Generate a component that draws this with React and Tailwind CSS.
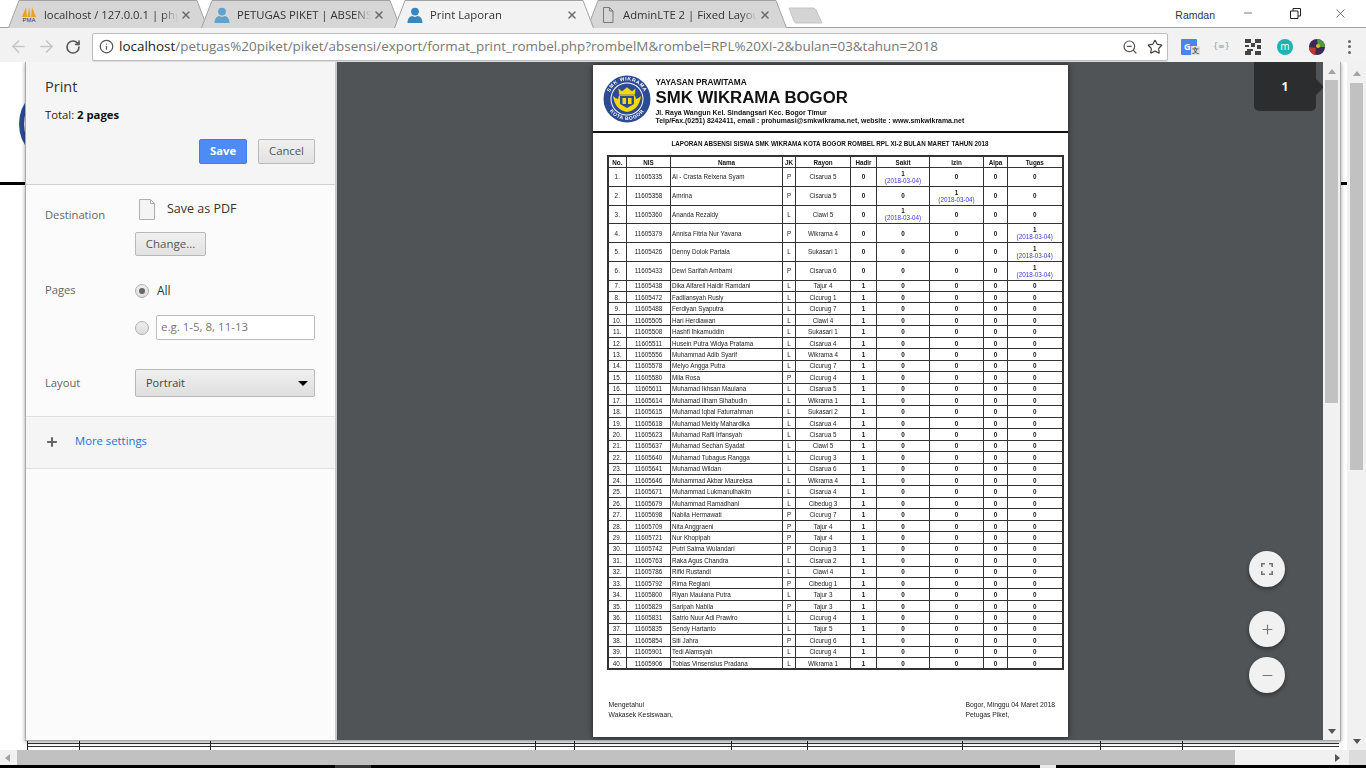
import { ArrowLeft, ArrowRight, RotateCw, Info, Star, ZoomOut, X, Minus, Plus } from "lucide-react";

const students = [
  ["11605335", "Al - Crasta Reixena Syam", "P", "Cisarua 5", "sakit"],
  ["11605358", "Amrina", "P", "Cisarua 5", "izin"],
  ["11605360", "Ananda Rezaldy", "L", "Ciawi 5", "sakit"],
  ["11605379", "Annisa Fitria Nur Yavana", "P", "Wikrama 4", "tugas"],
  ["11605426", "Denny Dolok Partala", "L", "Sukasari 1", "tugas"],
  ["11605433", "Dewi Sarifah Ambami", "P", "Cisarua 6", "tugas"],
  ["11605438", "Dika Alfarell Haidir Ramdani", "L", "Tajur 4"],
  ["11605472", "Fadliansyah Rusly", "L", "Cicurug 1"],
  ["11605488", "Ferdiyan Syaputra", "L", "Cicurug 7"],
  ["11605505", "Hari Herdiawan", "L", "Ciawi 4"],
  ["11605508", "Hashfi Ihkamuddin", "L", "Sukasari 1"],
  ["11605511", "Husein Putra Widya Pratama", "L", "Cisarua 4"],
  ["11605556", "Muhammad Adib Syarif", "L", "Wikrama 4"],
  ["11605578", "Melyo Angga Putra", "L", "Cicurug 7"],
  ["11605580", "Mila Rosa", "P", "Cicurug 4"],
  ["11605611", "Muhamad Ikhsan Maulana", "L", "Cisarua 5"],
  ["11605614", "Muhamad Ilham Sihabudin", "L", "Wikrama 1"],
  ["11605615", "Muhamad Iqbal Faturrahman", "L", "Sukasari 2"],
  ["11605618", "Muhamad Meidy Mahardika", "L", "Cisarua 4"],
  ["11605623", "Muhamad Rafli Irfansyah", "L", "Cisarua 5"],
  ["11605637", "Muhamad Sechan Syadat", "L", "Ciawi 5"],
  ["11605640", "Muhamad Tubagus Rangga", "L", "Cicurug 3"],
  ["11605641", "Muhamad Wildan", "L", "Cisarua 6"],
  ["11605646", "Muhammad Akbar Maureksa", "L", "Wikrama 4"],
  ["11605671", "Muhammad Lukmanulhakim", "L", "Cisarua 4"],
  ["11605679", "Muhammad Ramadhani", "L", "Cibedug 3"],
  ["11605698", "Nabila Hermawati", "P", "Cicurug 7"],
  ["11605709", "Nita Anggraeni", "P", "Tajur 4"],
  ["11605721", "Nur Khopipah", "P", "Tajur 4"],
  ["11605742", "Putri Salma Wulandari", "P", "Cicurug 3"],
  ["11605763", "Raka Agus Chandra", "L", "Cisarua 2"],
  ["11605786", "Rifki Rustandi", "L", "Ciawi 4"],
  ["11605792", "Rima Regiani", "P", "Cibedug 1"],
  ["11605800", "Riyan Maulana Putra", "L", "Tajur 3"],
  ["11605829", "Saripah Nabila", "P", "Tajur 3"],
  ["11605831", "Satrio Nuur Adi Prawiro", "L", "Cicurug 4"],
  ["11605835", "Sendy Hartanto", "L", "Tajur 5"],
  ["11605854", "Siti Jahra", "P", "Cicurug 6"],
  ["11605901", "Tedi Alamsyah", "L", "Cicurug 4"],
  ["11605906", "Tobias Vinsensius Pradana", "L", "Wikrama 1"],
];

const colWidths = ["w-[19px]", "w-[44px]", "w-[112px]", "w-[13px]", "w-[55px]", "w-[26px]", "w-[53px]", "w-[54px]", "w-[24px]", "w-[55px]"];
const headers = ["No.", "NIS", "Nama", "JK", "Rayon", "Hadir", "Sakit", "Izin", "Alpa", "Tugas"];
const tabs = [
  { title: "localhost / 127.0.0.1 | php", icon: "pma" },
  { title: "PETUGAS PIKET | ABSENS", icon: "person" },
  { title: "Print Laporan", icon: "person", active: true },
  { title: "AdminLTE 2 | Fixed Layou", icon: "doc" },
];
const pageTicks = ["w-[52px]", "w-[131px]", "w-[325px]", "w-[39px]", "w-[157px]", "w-[76px]", "w-[155px]", "w-[138px]", "w-[82px]", "w-[157px]"];

function PersonIcon({ active }) {
  return (
    <svg width="16" height="16" viewBox="0 0 16 16" className={active ? "text-[#3a87bd]" : "text-[#5fa3cf]"} fill="currentColor">
      <circle cx="8" cy="4.6" r="3.9" />
      <path d="M0.5 16c0-4.6 2.6-6.6 4.8-6.9 1.6 1.1 3.8 1.1 5.4 0 2.2.3 4.8 2.3 4.8 6.9z" />
    </svg>
  );
}

function PmaIcon() {
  return (
    <div className="w-4 h-4 flex flex-col items-center">
      <svg width="16" height="10" viewBox="0 0 16 10" fill="#f0a020">
        <path d="M1 10 5 0l1 10zM6.5 10 8 0l1.5 10zM10 10 11 0l4 10z" />
      </svg>
      <span className="text-[6px] leading-[6px] text-[#335] font-['Liberation_Sans',sans-serif]">PMA</span>
    </div>
  );
}

function DocIcon() {
  return (
    <svg width="16" height="16" viewBox="0 0 16 16" fill="none" stroke="#777" strokeWidth="1">
      <path d="M3.5.5h6l3.5 3.5v11.500h-9.500zM9.500.5v3.500h3.500" />
    </svg>
  );
}

function Tab({ title, icon, active }) {
  return (
    <div className={`relative w-[200px] h-[28px] -mr-[7px] shrink-0 flex items-center pt-[2px] pl-[13px] pr-[12px] ${active ? "z-10" : ""}`}>
      <svg className="absolute inset-0" width="200" height="28" viewBox="0 0 200 28">
        <path d="M0.500 28 11 0.500H189L199.500 28" fill={active ? "#f2f2f2" : "#d6d6d6"} stroke="#a2a2a2" />
      </svg>
      <div className="relative flex items-center w-full">
        <div className="w-4 h-4 shrink-0">
          {icon === "pma" && <PmaIcon />}
          {icon === "person" && <PersonIcon active={active} />}
          {icon === "doc" && <DocIcon />}
        </div>
        <span className="ml-[7px] w-[134px] overflow-hidden whitespace-nowrap text-[11.300px] text-[#333] [mask-image:linear-gradient(to_right,black_88%,transparent)]">{title}</span>
        <X size={12} strokeWidth={3} className="ml-[2px] text-[#6b6b6b]" />
      </div>
    </div>
  );
}

function TabStrip() {
  return (
    <div className="h-[28px] flex items-start bg-white pl-[8px] shrink-0 relative border-b border-[#a2a2a2]">
      {tabs.map((t) => (
        <Tab key={t.title} {...t} />
      ))}
      <svg className="ml-[8px] mt-[7px]" width="36" height="18" viewBox="0 0 36 18">
        <path d="M1 1h24q2 0 3 2l6 13H8q-1 0-2-2z" fill="#d4d4d4" stroke="#c4c4c4" />
      </svg>
      <span className="ml-auto mt-[8px] text-[10.500px] leading-[14px] text-[#333] font-['Liberation_Sans',sans-serif]">Ramdan</span>
      <div className="ml-[27px] mr-[18px] w-[106px] h-[18px] mt-[4px] flex items-center justify-between text-[#222]">
        <Minus size={12} strokeWidth={1.2} />
        <svg className="ml-[3px]" width="11" height="11" viewBox="0 0 11 11" fill="none" stroke="currentColor">
          <path d="M.5 3h7.500v7.500H.5zM3 3V.5h7.500V8H8" />
        </svg>
        <X size={15} strokeWidth={1} />
      </div>
    </div>
  );
}

function Extensions() {
  return (
    <div className="flex items-center gap-[16px] ml-auto -mr-[1px]">
      <div className="relative w-4 h-4 bg-[#4a86e8] rounded-[1px] text-[9px] font-bold text-white leading-4 pl-[3px]">
        G
        <span className="absolute -right-[3px] bottom-0 text-[7px] leading-[9px] bg-[#ddd] text-[#555] px-[1px]">文</span>
      </div>
      <span className="w-4 text-center text-[8px] text-[#999] font-['DejaVu_Sans',sans-serif] whitespace-nowrap">{"{≡}"}</span>
      <svg width="16" height="16" viewBox="0 0 8 8" fill="#444">
        <path d="M0 0h3v2H0zM5 0h3v2H5zM3 2h2v2H3zM0 3h2v1H0zM6 3h2v2H6zM1 5h3v1H1zM0 6h3v2H0zM5 6h3v2H5z" />
      </svg>
      <span className="w-4 h-4 rounded-full bg-[#19b5b5] text-white text-[10px] leading-[14px] text-center">m</span>
      <svg width="16" height="16" viewBox="0 0 16 16">
        <circle cx="8" cy="8" r="8" fill="#3b2a55" />
        <path d="M8 0a8 8 0 0 1 8 8H9z" fill="#4e9a3c" />
        <path d="M0 8a8 8 0 0 0 6 8l1-7z" fill="#c0392b" />
        <circle cx="9" cy="7" r="2" fill="#e4b62c" />
      </svg>
      <span className="flex flex-col gap-[2.500px] w-4 items-center">
        <i className="w-[3px] h-[3px] rounded-full bg-[#666]" />
        <i className="w-[3px] h-[3px] rounded-full bg-[#666]" />
        <i className="w-[3px] h-[3px] rounded-full bg-[#666]" />
      </span>
    </div>
  );
}

function Toolbar() {
  return (
    <div className="h-[34px] shrink-0 bg-[#f2f2f2] flex items-center pl-[9px] pr-[10px] pt-[3px]">
      <ArrowLeft size={19} strokeWidth={2} className="text-[#c6c6c6]" />
      <ArrowRight size={19} strokeWidth={2} className="ml-[9px] text-[#c6c6c6]" />
      <RotateCw size={16} strokeWidth={2.500} className="ml-[9px] text-[#5a5a5a]" />
      <div className="ml-[11px] w-[1076px] h-[28px] bg-white border border-[#bdbdbd] rounded-[2px] flex items-center pl-[6px] pr-[4px] shadow-[0_1px_1px_rgba(0,0,0,0.1)]">
        <Info size={15} strokeWidth={2} className="text-[#555] shrink-0" />
        <span className="ml-[5px] text-[13.450px] whitespace-nowrap text-[#777]">
          <span className="text-[#222]">localhost</span>/petugas%20piket/piket/absensi/export/format_print_rombel.php?rombelM&rombel=RPL%20XI-2&bulan=03&tahun=2018
        </span>
        <ZoomOut size={16} strokeWidth={1.800} className="ml-auto text-[#555]" />
        <Star size={16} strokeWidth={1.800} className="ml-[9px] text-[#444]" />
      </div>
      <Extensions />
    </div>
  );
}

function FieldLabel({ children }) {
  return <span className="w-[90px] shrink-0 text-[11.200px] text-[#666]">{children}</span>;
}

function PrintSidebar() {
  return (
    <div className="w-[311px] shrink-0 bg-[#fbfbfb] border-r-2 border-[#c8c8c8] flex flex-col">
      <div className="h-[123px] bg-[#f5f5f5] border-b border-[#d0d0d0] pl-[19px] pr-[20px] pt-[15px] shrink-0">
        <h1 className="text-[14.500px] leading-[20px] text-[#333]">Print</h1>
        <p className="mt-[9px] text-[11.300px] leading-[17px] text-[#222]">
          Total: <b className="text-[#111]">2 pages</b>
        </p>
        <div className="mt-[16px] flex justify-end gap-[11px]">
          <button className="w-[48px] h-[25px] bg-[#4d8bf5] border border-[#3f7ee8] rounded-[2px] text-[11.300px] font-bold text-white">Save</button>
          <button className="w-[57px] h-[25px] bg-linear-to-b from-[#f0f0f0] to-[#e2e2e2] border border-[#b8b8b8] rounded-[2px] text-[11.300px] text-[#555]">Cancel</button>
        </div>
      </div>
      <div className="pl-[19px] pr-[20px] pt-[13px]">
        <div className="flex">
          <FieldLabel>
            <span className="block pt-[9px]">Destination</span>
          </FieldLabel>
          <div>
            <div className="flex items-center ml-[4px] h-[22px]">
              <svg width="16" height="21" viewBox="0 0 16 21" fill="#f4f4f4" stroke="#b0b0b0">
                <path d="M.5.500h11l4 4v16H.5zM11.500.500v4h4" />
              </svg>
              <span className="ml-[12px] text-[12.500px] text-[#333]">Save as PDF</span>
            </div>
            <button className="mt-[12px] w-[71px] h-[24px] bg-linear-to-b from-[#f0f0f0] to-[#e2e2e2] border border-[#b8b8b8] rounded-[2px] text-[11.500px] text-[#555]">Change...</button>
          </div>
        </div>
        <div className="flex mt-[26px]">
          <FieldLabel>Pages</FieldLabel>
          <div>
            <div className="flex items-center h-[18px]">
              <span className="w-[14px] h-[14px] rounded-full border border-[#b0b0b0] bg-linear-to-b from-[#eee] to-[#ddd] flex items-center justify-center">
                <i className="w-[6px] h-[6px] rounded-full bg-[#666]" />
              </span>
              <span className="ml-[8px] text-[12px] text-[#333]">All</span>
            </div>
            <div className="flex items-center mt-[15px]">
              <span className="w-[14px] h-[14px] mt-[1px] rounded-full border border-[#b0b0b0] bg-linear-to-b from-[#eee] to-[#ddd]" />
              <span className="ml-[7px] w-[159px] h-[25px] bg-white border border-[#bdbdbd] rounded-[2px] pl-[4px] text-[11.500px] leading-[22px] text-[#777]">e.g. 1-5, 8, 11-13</span>
            </div>
          </div>
        </div>
        <div className="flex items-center mt-[29px]">
          <FieldLabel>Layout</FieldLabel>
          <div className="w-[180px] h-[28px] bg-linear-to-b from-[#f0f0f0] to-[#dfdfdf] border border-[#b8b8b8] rounded-[2px] flex items-center pl-[10px] pr-[6px] text-[11px] text-[#444]">
            Portrait
            <i className="ml-auto border-x-[5px] border-t-[5px] border-x-transparent border-t-black" />
          </div>
        </div>
      </div>
      <div className="mt-[19px] h-[53px] bg-[#f5f5f5] border-y border-[#e0e0e0] flex items-center pl-[19px] pb-[2px]">
        <Plus size={14} strokeWidth={3.500} className="text-[#666]" />
        <span className="ml-[16px] text-[11.300px] text-[#2a6fd6]">More settings</span>
      </div>
    </div>
  );
}

function SchoolLogo() {
  return (
    <svg width="48" height="48" viewBox="0 0 48 48" className="shrink-0">
      <defs>
        <path id="logoTop" d="M5.500 24a18.500 18.500 0 0 1 37 0" />
        <path id="logoBottom" d="M3 24a21 21 0 0 0 42 0" />
      </defs>
      <circle cx="24" cy="24" r="23.500" fill="#2c4b93" />
      <circle cx="24" cy="24" r="16.500" fill="#fff" />
      <circle cx="24" cy="24" r="15.500" fill="#2c4b93" />
      <text fontSize="5" fontWeight="700" fill="#fff" fontFamily="Liberation Sans, sans-serif" letterSpacing="0.6">
        <textPath href="#logoTop" startOffset="50%" textAnchor="middle">SMK WIKRAMA</textPath>
      </text>
      <text fontSize="5" fontWeight="700" fill="#fff" fontFamily="Liberation Sans, sans-serif" letterSpacing="0.6">
        <textPath href="#logoBottom" startOffset="50%" textAnchor="middle">KOTA BOGOR</textPath>
      </text>
      <path d="M10 21q2 14 14 16 12-2 14-16-3 3-5 3l-2-7q-7-3-14 0l-2 7q-2 0-5-3z" fill="#f5d90f" />
      <path d="M15 13l4 3 5-4 5 4 4-3-1 7H16z" fill="#f5d90f" stroke="#2c4b93" strokeWidth=".6" />
      <path d="M17 21h14v8l-7 4-7-4z" fill="#2c4b93" />
      <path d="M19.500 23h3.500v6h-3.500zM25 23h3.500v6H25z" fill="#f5d90f" />
    </svg>
  );
}

function CountCell({ on, date, hadir }) {
  return (
    <td className="border border-[#333] text-center font-bold p-0 text-[#111]">
      {on ? (
        <>
          1
          {date && <span className="block font-normal text-[#3a3ae0]">(2018-03-04)</span>}
        </>
      ) : (
        hadir || 0
      )}
    </td>
  );
}

function AttendanceTable() {
  return (
    <table className="ml-[14px] w-[455px] table-fixed border-collapse border-2 border-[#333] text-[6.300px] leading-[7px] text-[#222]">
      <colgroup>
        {colWidths.map((w, i) => (
          <col key={i} className={w} />
        ))}
      </colgroup>
      <thead>
        <tr className="h-[11.500px]">
          {headers.map((h) => (
            <th key={h} className="border border-[#333] font-bold text-center p-0 text-[#111]">{h}</th>
          ))}
        </tr>
      </thead>
      <tbody>
        {students.map(([nis, nama, jk, rayon, ket], i) => (
          <tr key={nis} className={ket ? "h-[18.770px]" : "h-[11.450px]"}>
            <td className="border border-[#333] text-center p-0">{i + 1}.</td>
            <td className="border border-[#333] text-center p-0">{nis}</td>
            <td className="border border-[#333] pl-[1px] p-0 whitespace-nowrap">{nama}</td>
            <td className="border border-[#333] text-center p-0">{jk}</td>
            <td className="border border-[#333] text-center p-0">{rayon}</td>
            <CountCell on={!ket} />
            <CountCell on={ket === "sakit"} date />
            <CountCell on={ket === "izin"} date />
            <CountCell />
            <CountCell on={ket === "tugas"} date />
          </tr>
        ))}
      </tbody>
    </table>
  );
}

function Paper() {
  return (
    <div className="w-[475px] h-[672px] shrink-0 bg-white overflow-hidden shadow-[0_0_6px_rgba(0,0,0,0.6)] blur-[0.25px] font-['Liberation_Sans',sans-serif]">
      <div className="flex pl-[10px] pt-[10px] h-[68px] border-b-2 border-[#111]">
        <SchoolLogo />
        <div className="ml-[5px] font-bold text-[#111]">
          <p className="text-[8.300px] leading-[10px] mt-[2px]">YAYASAN PRAWITAMA</p>
          <p className="text-[16.800px] leading-[20px] mt-[1px]">SMK WIKRAMA BOGOR</p>
          <p className="text-[6.930px] leading-[8px] mt-[1px]">Jl. Raya Wangun Kel. Sindangsari Kec. Bogor Timur</p>
          <p className="text-[6.930px] leading-[8px]">Telp/Fax.(0251) 8242411, email : prohumasi@smkwikrama.net, website : www.smkwikrama.net</p>
        </div>
      </div>
      <p className="mt-[7px] mb-[7px] text-center text-[6.270px] leading-[8px] font-bold text-[#111]">
        LAPORAN ABSENSI SISWA SMK WIKRAMA KOTA BOGOR ROMBEL RPL XI-2 BULAN MARET TAHUN 2018
      </p>
      <AttendanceTable />
      <div className="mt-[30px] px-[16px] flex justify-between text-[6.800px] leading-[10px] text-[#222]">
        <div>
          <p>Mengetahui</p>
          <p>Wakasek Kesiswaan,</p>
        </div>
        <div className="w-[89px] -mr-[3px] whitespace-nowrap">
          <p>Bogor, Minggu 04 Maret 2018</p>
          <p>Petugas Piket,</p>
        </div>
      </div>
    </div>
  );
}

function ZoomButton({ children, className }) {
  return (
    <div className={`w-[36px] h-[36px] rounded-full bg-[#f1f1f1] flex items-center justify-center text-[#757575] shadow-[0_2px_4px_rgba(0,0,0,0.4)] ${className}`}>
      {children}
    </div>
  );
}

function Preview() {
  return (
    <div className="relative flex-1 min-w-0 bg-[#505457] flex justify-center pt-[3px] overflow-hidden">
      <Paper />
      <div className="absolute top-0 right-[7px] w-[62px] h-[49px] bg-[#2b2d2f] rounded-b-[5px] flex items-center justify-center text-[12px] font-bold text-white">1</div>
      <i className="absolute top-[17px] -right-[1px] border-y-[8px] border-l-[8px] border-y-transparent border-l-[#2b2d2f]" />
      <div className="absolute left-[912px] top-[489px] flex flex-col">
        <ZoomButton>
          <svg width="12" height="12" viewBox="0 0 12 12" fill="none" stroke="currentColor" strokeWidth="1.600">
            <path d="M.8 4V.8H4M8 .8h3.200V4M11.200 8v3.200H8M4 11.200H.8V8" />
          </svg>
        </ZoomButton>
        <ZoomButton className="mt-[24px]">
          <Plus size={15} strokeWidth={1.800} />
        </ZoomButton>
        <ZoomButton className="mt-[10px]">
          <Minus size={15} strokeWidth={1.800} />
        </ZoomButton>
      </div>
    </div>
  );
}

function VerticalScrollbar({ width, thumbTop, thumbHeight, arrowGap, inset }) {
  return (
    <div className={`${width} shrink-0 bg-[#f1f1f1] flex flex-col items-center relative`}>
      <i className={`absolute ${arrowGap} border-x-[4px] border-b-[5px] border-x-transparent border-b-[#a3a3a3]`} />
      <div className={`${thumbTop} ${thumbHeight} ${inset} bg-[#c1c1c1]`} />
      <i className="mt-auto mb-[6px] border-x-[4px] border-t-[5px] border-x-transparent border-t-[#555]" />
    </div>
  );
}

function PrintDialog() {
  return (
    <div className="absolute left-[25px] top-0 w-[1316px] h-[679px] flex border-x border-b border-[#aaa] shadow-[0_1px_4px_rgba(0,0,0,0.4)]">
      <PrintSidebar />
      <Preview />
      <VerticalScrollbar width="w-[17px]" thumbTop="mt-[18px]" thumbHeight="h-[323px]" arrowGap="top-[7px]" inset="w-[13px]" />
    </div>
  );
}

function BackgroundPage() {
  return (
    <div className="relative flex-1 min-w-0 bg-white flex flex-col overflow-hidden">
      <div className="h-[123px] shrink-0 border-b-[3px] border-black pl-[19px] pt-[22px]">
        <div className="w-[80px] h-[80px] rounded-full border-[5px] border-[#2c4b93] bg-white" />
      </div>
      <div className="mt-auto ml-[27px] flex h-[9px] mb-0 shrink-0">
        {pageTicks.map((w, i) => (
          <div key={i} className={`${w} shrink-0 border-l border-[#222] pt-[2px]`}>
            <div className="h-[4px] border-y border-[#333]" />
          </div>
        ))}
      </div>
      <PrintDialog />
    </div>
  );
}

function HorizontalScrollbar() {
  return (
    <div className="h-[15px] shrink-0 bg-[#f1f1f1] flex items-center relative">
      <i className="ml-[5px] border-y-[4px] border-r-[5px] border-y-transparent border-r-[#a3a3a3]" />
      <div className="ml-[7px] w-[1218px] h-[15px] bg-[#c1c1c1]" />
      <i className="ml-[100px] border-y-[4px] border-l-[5px] border-y-transparent border-l-[#555]" />
      <div className="ml-auto w-[17px] h-[15px] bg-[#dcdcdc]" />
    </div>
  );
}

export default function App() {
  return (
    <div className="w-[1366px] h-[768px] overflow-hidden flex flex-col bg-white font-['Open_Sans',sans-serif]">
      <TabStrip />
      <Toolbar />
      <div className="flex-1 min-h-0 flex">
        <BackgroundPage />
        <VerticalScrollbar width="w-[19px] ml-0" thumbTop="mt-[21px]" thumbHeight="h-[387px]" arrowGap="top-[9px]" inset="w-[13px]" />
      </div>
      <HorizontalScrollbar />
      <div className="h-[3px] shrink-0 bg-black flex">
        <div className="ml-[335px] w-[36px] bg-[#333]" />
        <div className="ml-[669px] w-[16px] bg-[#e8e8e8]" />
      </div>
    </div>
  );
}
